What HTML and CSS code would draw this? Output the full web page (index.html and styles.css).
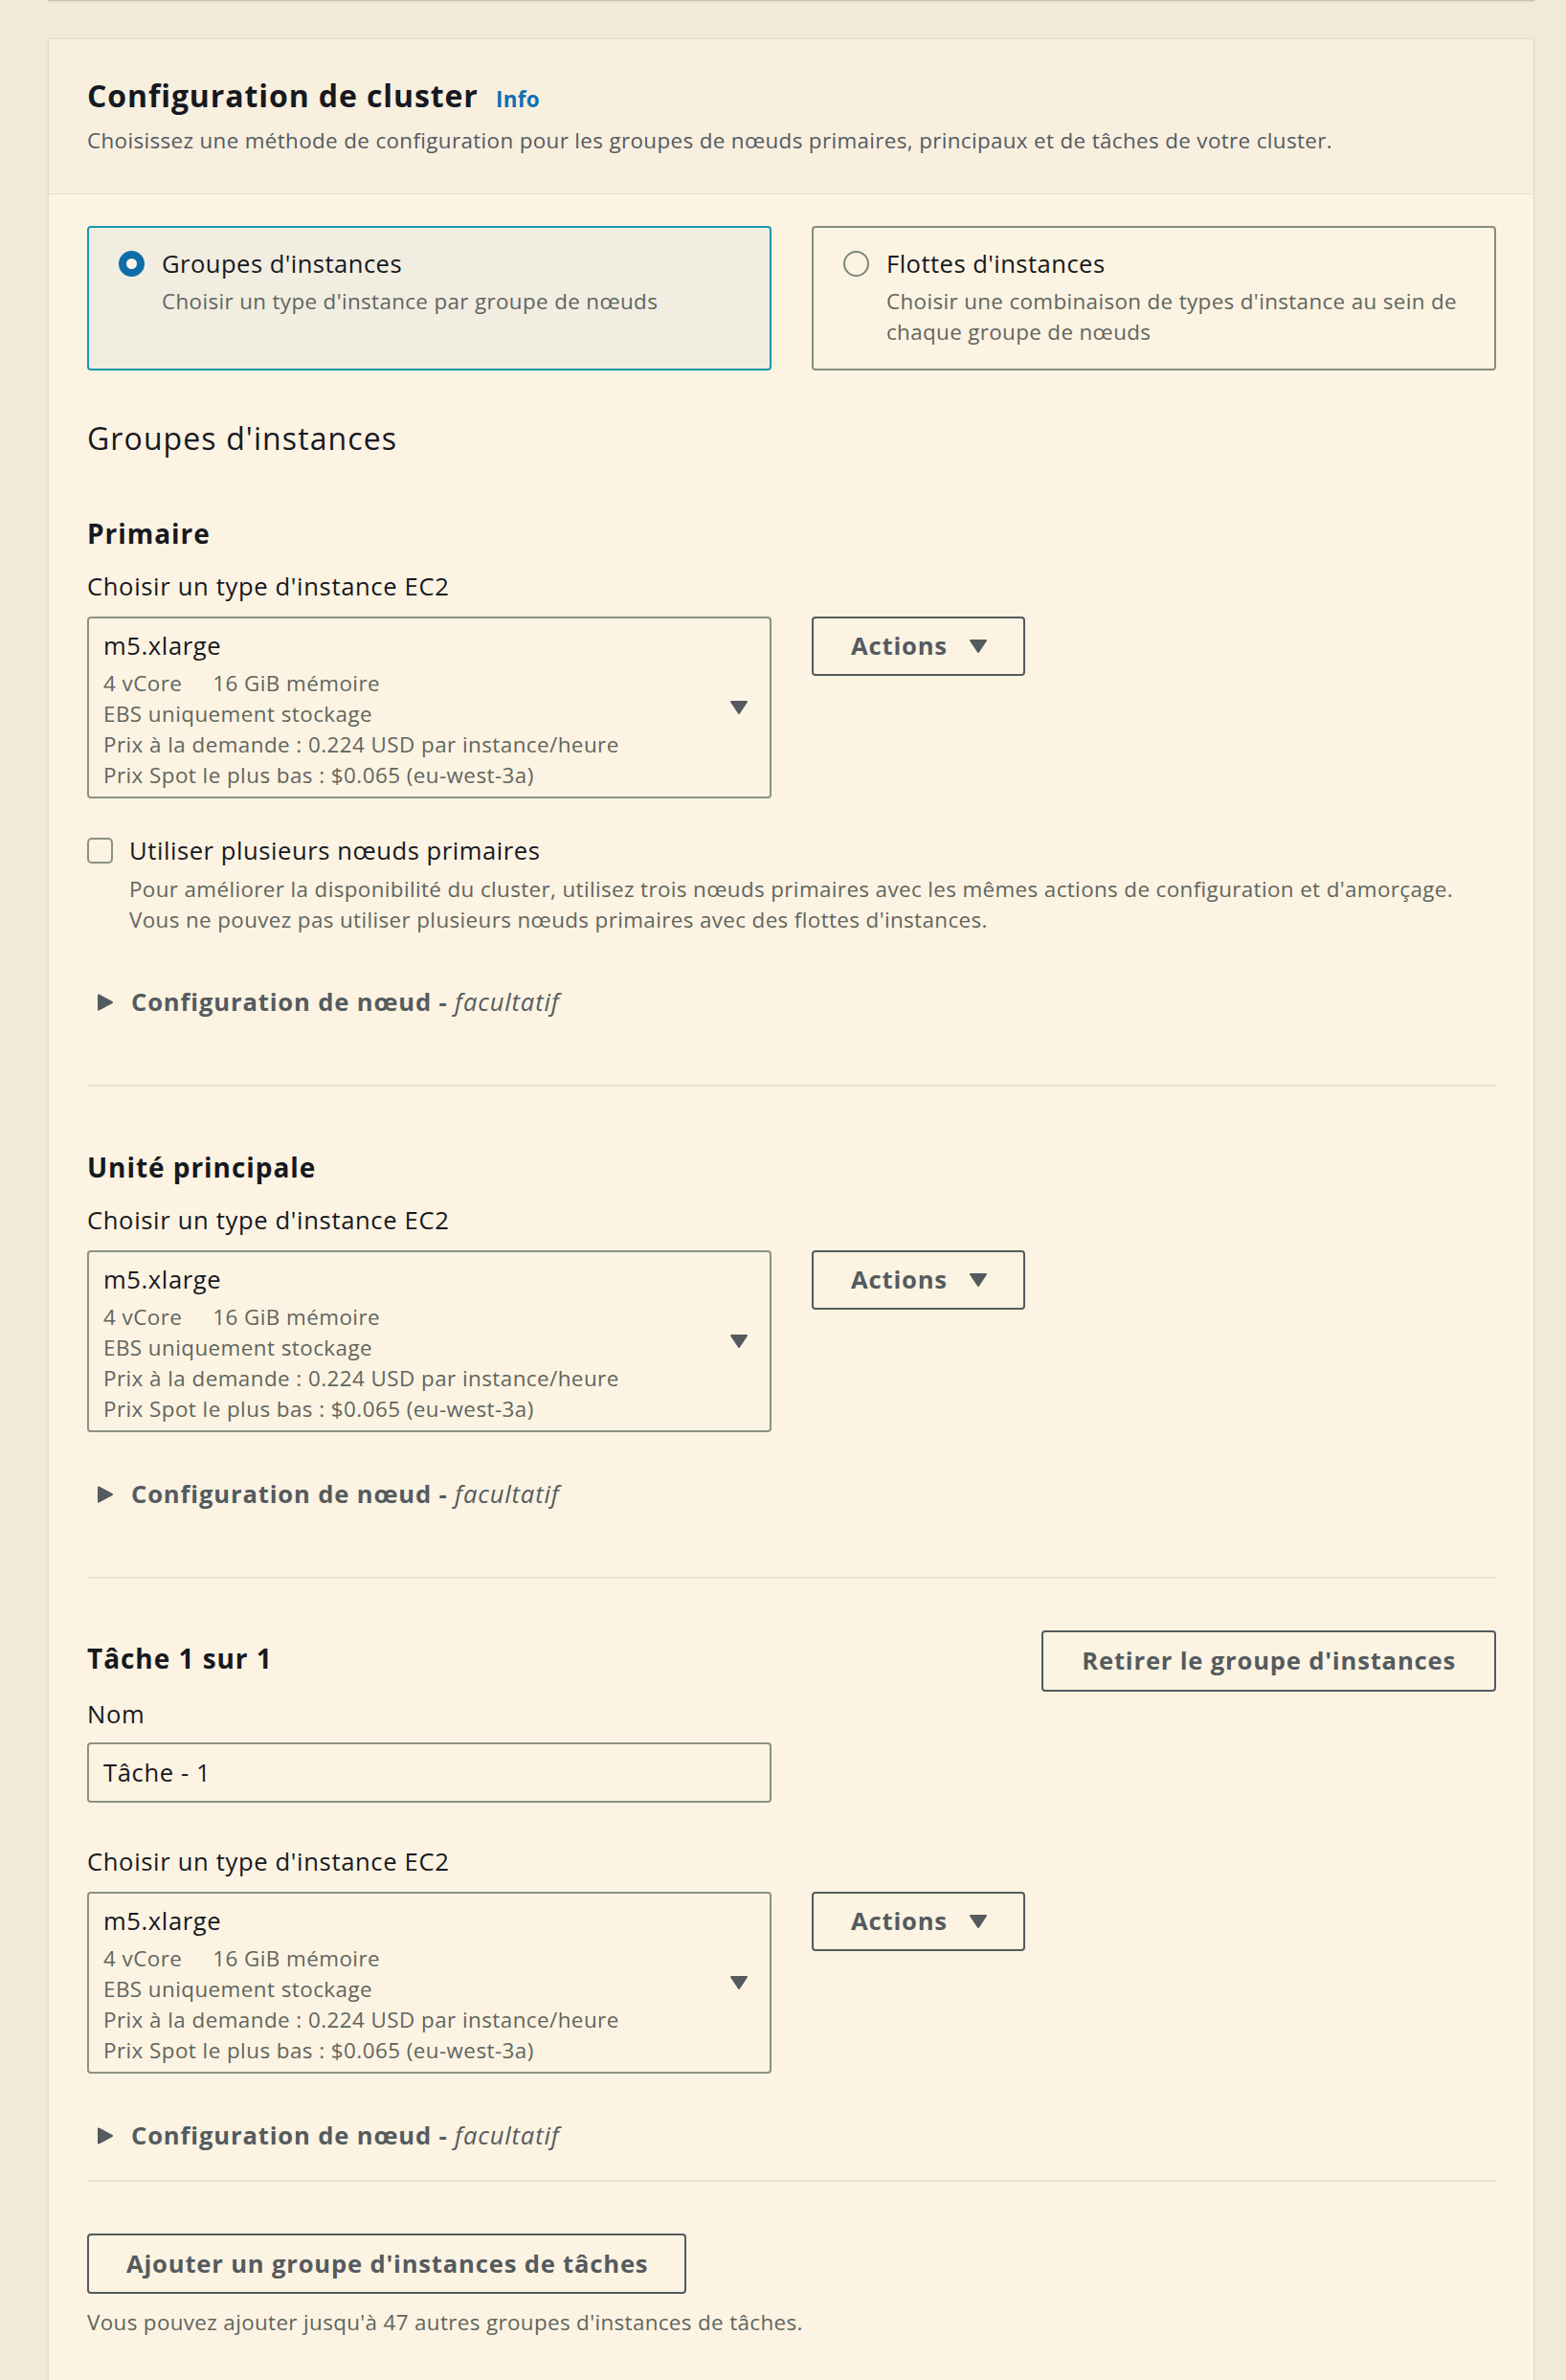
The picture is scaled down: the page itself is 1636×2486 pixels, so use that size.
FILE: index.html
```html
<!DOCTYPE html>
<html lang="fr">
<head>
<meta charset="utf-8">
<title>Configuration de cluster</title>
<link rel="stylesheet" href="styles.css">
</head>
<body>
<div class="page">
  <div class="prev-card"></div>
  <section class="container">
    <header class="container-header">
      <h2 class="title">Configuration de cluster <a class="info" href="#">Info</a></h2>
      <p class="header-desc">Choisissez une méthode de configuration pour les groupes de nœuds primaires, principaux et de tâches de votre cluster.</p>
    </header>
    <div class="container-body">
      <div class="tiles">
        <label class="tile tile-selected">
          <span class="radio radio-checked"></span>
          <span class="tile-text">
            <span class="tile-label">Groupes d'instances</span>
            <span class="tile-desc">Choisir un type d'instance par groupe de nœuds</span>
          </span>
        </label>
        <label class="tile">
          <span class="radio"></span>
          <span class="tile-text">
            <span class="tile-label">Flottes d'instances</span>
            <span class="tile-desc">Choisir une combinaison de types d'instance au sein de chaque groupe de nœuds</span>
          </span>
        </label>
      </div>

      <h3 class="groups-title">Groupes d'instances</h3>

      <div class="group group-first">
        <h4 class="group-title">Primaire</h4>
        <div class="field-label">Choisir un type d'instance EC2</div>
        <div class="select-row">
          <div class="select">
            <div class="select-value">m5.xlarge</div>
            <div class="select-meta"><span class="meta-gap">4 vCore</span>16 GiB mémoire</div>
            <div class="select-meta">EBS uniquement stockage</div>
            <div class="select-meta">Prix à la demande : 0.224 USD par instance/heure</div>
            <div class="select-meta">Prix Spot le plus bas : $0.065 (eu-west-3a)</div>
            <svg class="select-caret" viewBox="0 0 20 16" width="20" height="16"><path d="M2 2h16l-8 12z" fill="#545b5f" stroke="#545b5f" stroke-width="2" stroke-linejoin="round"/></svg>
          </div>
          <button class="btn btn-actions">Actions <svg class="btn-caret" viewBox="0 0 20 16" width="20" height="16"><path d="M2 2h16l-8 12z" fill="#545b5f" stroke="#545b5f" stroke-width="2" stroke-linejoin="round"/></svg></button>
        </div>
        <div class="checkbox-row">
          <span class="checkbox"></span>
          <div class="checkbox-text">
            <div class="checkbox-label">Utiliser plusieurs nœuds primaires</div>
            <div class="checkbox-desc">Pour améliorer la disponibilité du cluster, utilisez trois nœuds primaires avec les mêmes actions de configuration et d'amorçage.<br>Vous ne pouvez pas utiliser plusieurs nœuds primaires avec des flottes d'instances.</div>
          </div>
        </div>
        <div class="expand expand-after-checkbox">
          <svg class="expand-caret" viewBox="0 0 18 18" width="18" height="18"><path d="M2 1.5L16 9 2 16.5z" fill="#545b5f" stroke="#545b5f" stroke-width="2" stroke-linejoin="round"/></svg>
          <span class="expand-label">Configuration de nœud - <em>facultatif</em></span>
        </div>
      </div>

      <hr class="divider">

      <div class="group">
        <h4 class="group-title">Unité principale</h4>
        <div class="field-label">Choisir un type d'instance EC2</div>
        <div class="select-row">
          <div class="select">
            <div class="select-value">m5.xlarge</div>
            <div class="select-meta"><span class="meta-gap">4 vCore</span>16 GiB mémoire</div>
            <div class="select-meta">EBS uniquement stockage</div>
            <div class="select-meta">Prix à la demande : 0.224 USD par instance/heure</div>
            <div class="select-meta">Prix Spot le plus bas : $0.065 (eu-west-3a)</div>
            <svg class="select-caret" viewBox="0 0 20 16" width="20" height="16"><path d="M2 2h16l-8 12z" fill="#545b5f" stroke="#545b5f" stroke-width="2" stroke-linejoin="round"/></svg>
          </div>
          <button class="btn btn-actions">Actions <svg class="btn-caret" viewBox="0 0 20 16" width="20" height="16"><path d="M2 2h16l-8 12z" fill="#545b5f" stroke="#545b5f" stroke-width="2" stroke-linejoin="round"/></svg></button>
        </div>
        <div class="expand">
          <svg class="expand-caret" viewBox="0 0 18 18" width="18" height="18"><path d="M2 1.5L16 9 2 16.5z" fill="#545b5f" stroke="#545b5f" stroke-width="2" stroke-linejoin="round"/></svg>
          <span class="expand-label">Configuration de nœud - <em>facultatif</em></span>
        </div>
      </div>

      <hr class="divider">

      <div class="group group-task">
        <div class="task-head">
          <h4 class="group-title task-title">Tâche 1 sur 1</h4>
          <button class="btn btn-wide">Retirer le groupe d'instances</button>
        </div>
        <div class="field-label field-label-tight">Nom</div>
        <div class="input-row">
          <div class="input">Tâche - 1</div>
        </div>
        <div class="field-label field-label-spaced">Choisir un type d'instance EC2</div>
        <div class="select-row">
          <div class="select">
            <div class="select-value">m5.xlarge</div>
            <div class="select-meta"><span class="meta-gap">4 vCore</span>16 GiB mémoire</div>
            <div class="select-meta">EBS uniquement stockage</div>
            <div class="select-meta">Prix à la demande : 0.224 USD par instance/heure</div>
            <div class="select-meta">Prix Spot le plus bas : $0.065 (eu-west-3a)</div>
            <svg class="select-caret" viewBox="0 0 20 16" width="20" height="16"><path d="M2 2h16l-8 12z" fill="#545b5f" stroke="#545b5f" stroke-width="2" stroke-linejoin="round"/></svg>
          </div>
          <button class="btn btn-actions">Actions <svg class="btn-caret" viewBox="0 0 20 16" width="20" height="16"><path d="M2 2h16l-8 12z" fill="#545b5f" stroke="#545b5f" stroke-width="2" stroke-linejoin="round"/></svg></button>
        </div>
        <div class="expand">
          <svg class="expand-caret" viewBox="0 0 18 18" width="18" height="18"><path d="M2 1.5L16 9 2 16.5z" fill="#545b5f" stroke="#545b5f" stroke-width="2" stroke-linejoin="round"/></svg>
          <span class="expand-label">Configuration de nœud - <em>facultatif</em></span>
        </div>
      </div>

      <hr class="divider divider-last">

      <div class="add-group">
        <button class="btn btn-add">Ajouter un groupe d'instances de tâches</button>
        <p class="hint">Vous pouvez ajouter jusqu'à 47 autres groupes d'instances de tâches.</p>
      </div>
    </div>
  </section>
</div>
</body>
</html>
```

FILE: styles.css
```css
* { box-sizing: border-box; }

html, body {
  margin: 0;
  padding: 0;
}

body {
  background: #f2e9d8;
  font-family: "Open Sans", Roboto, "Liberation Sans", Arial, sans-serif;
  color: #16191f;
  font-size: 25.6px;
  line-height: 36px;
  letter-spacing: 0.55px;
}

.page {
  padding: 0 33px 0 50px;
  min-height: 2486px;
}

.prev-card {
  height: 1px;
  background: #c9c2b3;
  box-shadow: 0 1px 2px rgba(0,0,0,0.12);
}

.container {
  margin-top: 39px;
  background: #fdf3e2;
  border: 1px solid #e2dacb;
  border-radius: 2px;
  box-shadow: 0 1px 2px rgba(90,70,40,0.12);
  min-height: 2460px;
}

.container-header {
  background: #f9efdf;
  border-bottom: 1px solid #e9e0d0;
  padding: 39px 40px 39px;
}

.title {
  margin: 0;
  font-size: 32px;
  line-height: 40px;
  font-weight: 700;
  letter-spacing: 0.9px;
  color: #16191f;
}

.info {
  margin-left: 9px;
  font-size: 22.4px;
  line-height: 28px;
  font-weight: 700;
  letter-spacing: 0.3px;
  color: #0f6fb3;
  text-decoration: none;
}

.header-desc {
  margin: 11px 0 0;
  font-size: 22.4px;
  line-height: 32px;
  letter-spacing: 0.36px;
  color: #545b5f;
}

.container-body {
  padding: 33px 39px 40px 40px;
}

.tiles {
  display: grid;
  grid-template-columns: 1fr 1fr;
  column-gap: 42px;
}

.tile {
  display: flex;
  align-items: flex-start;
  gap: 18px;
  border: 2px solid #868d80;
  border-radius: 4px;
  padding: 20px 24px 22px 31px;
  cursor: pointer;
}

.tile-selected {
  background: #f1ede1;
  border-color: #1b98ad;
}

.radio {
  flex: none;
  width: 27px;
  height: 27px;
  margin-top: 4px;
  border-radius: 50%;
  border: 2px solid #7d8779;
  background: #fdf3e2;
}

.radio-checked {
  border: 8px solid #0f6ea8;
  background: #fbf5ea;
}

.tile-text {
  display: flex;
  flex-direction: column;
}

.tile-label {
  font-size: 25.6px;
  line-height: 36px;
  letter-spacing: 0.45px;
  color: #16191f;
}

.tile-desc {
  margin-top: 5px;
  font-size: 22.4px;
  line-height: 32px;
  letter-spacing: 0.36px;
  color: #5f6660;
}

.groups-title {
  margin: 51px 0 0;
  font-size: 32px;
  line-height: 40px;
  font-weight: 400;
  letter-spacing: 1.1px;
  color: #16191f;
}

.group-title {
  margin: 66px 0 0;
  font-size: 28px;
  line-height: 36px;
  font-weight: 700;
  letter-spacing: 0.95px;
  color: #16191f;
}

.group-first .group-title {
  margin-top: 61px;
}

.field-label {
  margin-top: 20px;
  font-size: 25.6px;
  line-height: 36px;
  letter-spacing: 0.65px;
  color: #16191f;
}

.field-label-tight { margin-top: 6px; }
.field-label-spaced { margin-top: 44px; }

.select-row {
  margin-top: 13px;
  display: grid;
  grid-template-columns: 1fr 1fr;
  column-gap: 42px;
  align-items: start;
}

.select {
  position: relative;
  border: 2px solid #8b9283;
  border-radius: 4px;
  padding: 11px 60px 6px 15px;
}

.select-value {
  font-size: 25.6px;
  line-height: 36px;
  letter-spacing: 0.6px;
  color: #16191f;
  margin-bottom: 5px;
}

.select-meta {
  font-size: 22.4px;
  line-height: 32px;
  letter-spacing: 0.45px;
  color: #5f6660;
}

.meta-gap {
  margin-right: 32px;
}

.select-caret {
  position: absolute;
  right: 22px;
  top: 50%;
  margin-top: -8px;
}

.btn {
  justify-self: start;
  display: inline-flex;
  align-items: center;
  background: transparent;
  border: 2px solid #545b5f;
  border-radius: 4px;
  font-family: inherit;
  font-size: 25.6px;
  line-height: 36px;
  font-weight: 700;
  letter-spacing: 0.82px;
  color: #545b5f;
  padding: 11px 37px 11px 39px;
  cursor: pointer;
}

.btn-actions {
  gap: 22px;
}

.btn-wide {
  padding: 12px 40px;
}

.checkbox-row {
  margin-top: 37px;
  display: flex;
  align-items: flex-start;
  gap: 17px;
}

.checkbox {
  flex: none;
  width: 27px;
  height: 27px;
  margin-top: 4px;
  border: 2px solid #8b9283;
  border-radius: 5px;
}

.checkbox-label {
  font-size: 25.6px;
  line-height: 36px;
  letter-spacing: 0.55px;
}

.checkbox-desc {
  margin-top: 6px;
  font-size: 22.4px;
  line-height: 32px;
  letter-spacing: 0.38px;
  color: #5f6660;
}

.expand {
  margin-top: 47px;
  display: flex;
  align-items: center;
  gap: 18px;
  padding-left: 10px;
}

.expand-after-checkbox {
  margin-top: 52px;
}

.expand-caret { flex: none; }

.expand-label {
  font-size: 25.6px;
  line-height: 36px;
  font-weight: 700;
  letter-spacing: 0.85px;
  color: #545b5f;
}

.expand-label em {
  font-weight: 400;
}

.divider {
  margin: 68px 0 0;
  border: 0;
  height: 2px;
  background: #ebe3d3;
}

.divider-last {
  margin-top: 28px;
}

.task-head {
  margin-top: 54px;
  display: flex;
  justify-content: space-between;
  align-items: flex-start;
}

.task-title {
  margin-top: 11px;
}

.input-row {
  margin-top: 11px;
  display: grid;
  grid-template-columns: 1fr 1fr;
  column-gap: 42px;
}

.input {
  border: 2px solid #8b9283;
  border-radius: 4px;
  padding: 12px 15px 11px;
  font-size: 25.6px;
  line-height: 36px;
  letter-spacing: 0.6px;
  color: #16191f;
}

.add-group {
  margin-top: 54px;
}

.btn-add {
  padding: 12px 38px 11px 39px;
}

.hint {
  margin: 14px 0 0;
  font-size: 22.4px;
  line-height: 32px;
  letter-spacing: 0.36px;
  color: #5f6660;
}
```
